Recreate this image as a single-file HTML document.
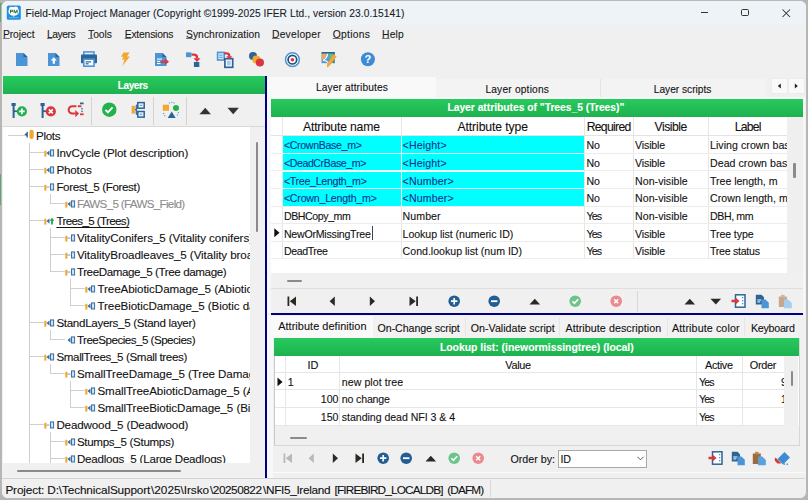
<!DOCTYPE html>
<html><head><meta charset="utf-8">
<style>
*{box-sizing:border-box}
html,body{margin:0;padding:0}
body{width:808px;height:500px;overflow:hidden;position:relative;background:#b5b5b2;font-family:"Liberation Sans",sans-serif;color:#1a1a1a}
.a{position:absolute}
.t{position:absolute;white-space:nowrap;line-height:1;-webkit-text-stroke:0.1px currentColor}
svg{position:absolute;overflow:visible}
</style></head><body>
<div class="a" style="left:0px;top:3px;width:2px;height:19px;background:#5fa874;"></div>
<div class="a" style="left:0px;top:174px;width:2px;height:31px;background:#5fa874;"></div>
<div class="a" style="left:1px;top:0px;width:805.5px;height:499px;background:#f0f0f0;border-radius:7px;border:1px solid #bab7b4"></div>
<div class="a" style="left:2px;top:1px;width:803.5px;height:24px;background:#eef3f8;border-radius:6px 6px 0 0"></div>
<svg style="left:6px;top:5px" width="16" height="16" viewBox="0 0 16 16"><rect x="0.8" y="0.6" width="14" height="14.2" rx="1.6" fill="#1e90dc"/>
<ellipse cx="7.7" cy="6.4" rx="5.3" ry="4.3" fill="#fff"/><circle cx="5.2" cy="3.8" r="2" fill="#fff"/><circle cx="9.8" cy="3.6" r="2.2" fill="#fff"/>
<path d="M4 4.8H4.9V8.2H4Z M4 4.8H6.2Q7 4.8 7 5.9Q7 7 6.2 7H4.9V6.2H6Q6.2 6.2 6.2 5.9Q6.2 5.6 6 5.6H4.9Z M7.6 4.8H8.6L9.6 7L10.6 4.8H11.6V8.2H10.8V6.2L9.9 8.2H9.3L8.4 6.2V8.2H7.6Z" fill="#2f6b2f"/>
<rect x="2.6" y="12.3" width="10.2" height="0.9" fill="#6bb6ea"/><rect x="7.2" y="11" width="0.9" height="0.9" fill="#cfe8f8"/></svg>
<div class="t" style="left:25.50px;top:8.87px;font-size:10.2px;color:#1c1c1c;letter-spacing:0.072px;">Field-Map Project Manager (Copyright ©1999-2025 IFER Ltd., version 23.0.15141)</div>
<div class="a" style="left:700.5px;top:12px;width:7.5px;height:1px;background:#333;"></div>
<div class="a" style="left:741px;top:9.3px;width:8px;height:7.2px;background:transparent;border:1px solid #333;border-radius:1.5px"></div>
<svg style="left:782px;top:8.5px" width="9" height="9" viewBox="0 0 9 9"><path d="M0.5 0.5L8 8M8 0.5L0.5 8" stroke="#333" stroke-width="1.05"/></svg>
<div class="t" style="left:2.90px;top:30.38px;font-size:10.3px;color:#1a1a1a;letter-spacing:-0.076px;"><u style="text-decoration-thickness:0.8px;text-underline-offset:0.4px;text-decoration-color:#777">P</u>roject</div>
<div class="t" style="left:47.00px;top:30.38px;font-size:10.3px;color:#1a1a1a;letter-spacing:-0.462px;"><u style="text-decoration-thickness:0.8px;text-underline-offset:0.4px;text-decoration-color:#777">L</u>ayers</div>
<div class="t" style="left:88.00px;top:30.38px;font-size:10.3px;color:#1a1a1a;letter-spacing:-0.010px;"><u style="text-decoration-thickness:0.8px;text-underline-offset:0.4px;text-decoration-color:#777">T</u>ools</div>
<div class="t" style="left:124.70px;top:30.38px;font-size:10.3px;color:#1a1a1a;letter-spacing:-0.176px;"><u style="text-decoration-thickness:0.8px;text-underline-offset:0.4px;text-decoration-color:#777">E</u>xtensions</div>
<div class="t" style="left:186.00px;top:30.38px;font-size:10.3px;color:#1a1a1a;letter-spacing:0.051px;"><u style="text-decoration-thickness:0.8px;text-underline-offset:0.4px;text-decoration-color:#777">S</u>ynchronization</div>
<div class="t" style="left:272.00px;top:30.38px;font-size:10.3px;color:#1a1a1a;letter-spacing:0.219px;"><u style="text-decoration-thickness:0.8px;text-underline-offset:0.4px;text-decoration-color:#777">D</u>eveloper</div>
<div class="t" style="left:332.80px;top:30.38px;font-size:10.3px;color:#1a1a1a;letter-spacing:0.251px;"><u style="text-decoration-thickness:0.8px;text-underline-offset:0.4px;text-decoration-color:#777">O</u>ptions</div>
<div class="t" style="left:382.00px;top:30.38px;font-size:10.3px;color:#1a1a1a;letter-spacing:0.204px;"><u style="text-decoration-thickness:0.8px;text-underline-offset:0.4px;text-decoration-color:#777">H</u>elp</div>
<svg style="left:15px;top:52px" width="14" height="15" viewBox="0 0 14 15"><path d="M1 1H8.5L12.5 5V14H1Z" fill="#4b94d6"/><path d="M8.5 1L12.5 5H8.5Z" fill="#2b6497"/></svg>
<svg style="left:47px;top:52px" width="14" height="15" viewBox="0 0 14 15"><path d="M1 1H8.5L12.5 5V14H1Z" fill="#4b94d6"/><path d="M8.5 1L12.5 5H8.5Z" fill="#2b6497"/><path d="M6.8 5.2L3.8 8.4H5.7V11.8H7.9V8.4H9.8Z" fill="#fff"/></svg>
<svg style="left:80px;top:50px" width="18" height="18" viewBox="0 0 18 18"><rect x="3.8" y="1.9" width="10.2" height="3.6" fill="#dfeaf6" stroke="#4b94d6" stroke-width="1.5"/><rect x="1" y="4.6" width="16" height="8.6" rx="0.8" fill="#2b6497"/><rect x="3.8" y="9.2" width="10.2" height="7" fill="#fff" stroke="#4b94d6" stroke-width="1.6"/><rect x="5.6" y="11.3" width="5.5" height="1.2" fill="#2b6497"/><rect x="5.6" y="13.2" width="3" height="1.2" fill="#2b6497"/></svg>
<svg style="left:119px;top:52px" width="12" height="15" viewBox="0 0 12 15"><path d="M4.5 0.5H10.5L8 4.5H10.8L3.5 14L5.5 7.5H2.8L4.5 4.8H2Z" fill="#f2a72e"/></svg>
<svg style="left:154px;top:52px" width="16" height="15" viewBox="0 0 16 15"><path d="M1 1H8.5L12.5 5V14H1Z" fill="#4b94d6"/><path d="M8.5 1L12.5 5H8.5Z" fill="#2b6497"/><rect x="3" y="6.5" width="5" height="1.1" fill="#fff"/><rect x="3" y="8.8" width="3.5" height="1.1" fill="#fff"/><rect x="3" y="11" width="3.5" height="1.1" fill="#fff"/><path d="M6.5 8.7H11V6.3L15 9.7L11 13.1V10.7H6.5Z" fill="#d9363e"/></svg>
<svg style="left:185px;top:51px" width="17" height="17" viewBox="0 0 17 17"><rect x="1" y="1.4" width="5.4" height="4.8" fill="#4b94d6"/><rect x="8.9" y="11" width="5.4" height="5" fill="#2b6497"/><path d="M6.5 3.7H8.8Q12 3.7 12 6.6V7.6" stroke="#d9363e" stroke-width="2.3" fill="none"/><path d="M8.5 7.2H15.5L12 11Z" fill="#d9363e"/></svg>
<svg style="left:216px;top:51px" width="18" height="17" viewBox="0 0 18 17"><rect x="1.6" y="1.4" width="6.6" height="7.6" fill="#dceaf8" stroke="#4b94d6" stroke-width="1.6"/><rect x="3.3" y="3.6" width="3.2" height="1" fill="#4b94d6"/><rect x="3.3" y="5.8" width="3.2" height="1" fill="#4b94d6"/><rect x="8.9" y="7.7" width="7.8" height="8.6" fill="#fff" stroke="#2b6497" stroke-width="1.7"/><rect x="10.8" y="9.6" width="4" height="4.8" fill="#a9cbee"/><path d="M8.3 2.3H10.6Q13.3 2.3 13.3 4.8V5.6" stroke="#d9363e" stroke-width="2.2" fill="none"/><path d="M10.2 5.2H16.4L13.3 8.6Z" fill="#d9363e"/></svg>
<svg style="left:247px;top:50px" width="18" height="18" viewBox="0 0 18 18"><circle cx="6" cy="6" r="4" fill="#2b6497"/><circle cx="9.4" cy="9.4" r="4" fill="#f2a72e"/><circle cx="12.9" cy="12.5" r="4.1" fill="#d9363e"/></svg>
<svg style="left:284px;top:51px" width="17" height="17" viewBox="0 0 17 17"><circle cx="8.4" cy="8.7" r="6.9" fill="#fff" stroke="#4b94d6" stroke-width="1.5"/><circle cx="8.4" cy="8.7" r="4.3" fill="#fff" stroke="#1e4f7c" stroke-width="1.7"/><circle cx="8.4" cy="8.7" r="1.8" fill="#d9363e"/></svg>
<svg style="left:320px;top:51px" width="17" height="17" viewBox="0 0 17 17"><rect x="1.5" y="2.3" width="12" height="9.9" fill="#5b9bd5"/><path d="M1.5 2.3H7Q7 7 1.5 8.8Z" fill="#e3ad5c"/><path d="M8.3 2.3H13.5V10.5L10.5 12.2Q10 7 8.3 2.3Z" fill="#58bd86"/><path d="M7.6 2.3Q7.3 7.5 3 9.3Q6.5 9.5 9 12.2" stroke="#fff" stroke-width="1.1" fill="none"/><rect x="1.5" y="1" width="13.2" height="1.6" fill="#2b6497"/><rect x="13.2" y="1" width="1.5" height="11.2" fill="#2b6497"/><path d="M13.4 3.3L16.7 5.6L9.4 15.1L7 16.5L7 13.3Z" fill="#f2a72e"/></svg>
<svg style="left:360px;top:51px" width="16" height="17" viewBox="0 0 16 17"><circle cx="7.9" cy="8.3" r="7" fill="#3d8bd3"/><text x="7.9" y="12.2" font-size="11" font-weight="bold" text-anchor="middle" fill="#fff" font-family="Liberation Sans">?</text></svg>
<div class="a" style="left:2px;top:75px;width:263px;height:1px;background:#f4eef0;"></div>
<div class="a" style="left:3px;top:76px;width:261.5px;height:18px;background:linear-gradient(#27ca5e,#1eb14f);"></div>
<div class="t" style="left:117.80px;top:80.94px;font-size:10.0px;color:#fff;letter-spacing:-0.390px;font-weight:bold;">Layers</div>
<div class="a" style="left:90.5px;top:97px;width:1px;height:28px;background:#d4d4d4;"></div>
<div class="a" style="left:152.7px;top:97px;width:1px;height:28px;background:#d4d4d4;"></div>
<div class="a" style="left:186.4px;top:97px;width:1px;height:28px;background:#d4d4d4;"></div>
<svg style="left:11px;top:102.5px" width="18" height="16" viewBox="0 0 18 16"><rect x="0.5" y="0" width="4.2" height="3" fill="#2b6497"/><rect x="1.6" y="2" width="2" height="13" fill="#2b6497"/><rect x="2.5" y="7.3" width="4" height="1.8" fill="#2b6497"/><circle cx="10.9" cy="8.4" r="5.1" fill="#22b24c"/><path d="M10.9 5.6V11.2M8.1 8.4H13.7" stroke="#fff" stroke-width="1.7"/></svg>
<svg style="left:39.5px;top:102.5px" width="18" height="16" viewBox="0 0 18 16"><rect x="0.5" y="0" width="4.2" height="3" fill="#2b6497"/><rect x="1.6" y="2" width="2" height="13" fill="#2b6497"/><rect x="2.5" y="7.3" width="4" height="1.8" fill="#2b6497"/><circle cx="10.8" cy="8.4" r="5.1" fill="#d9363e"/><path d="M8.8 6.4L12.8 10.4M12.8 6.4L8.8 10.4" stroke="#fff" stroke-width="1.6"/></svg>
<svg style="left:67px;top:101.5px" width="18" height="17" viewBox="0 0 18 17"><path d="M9.4 4.2H5.4A3.7 3.6 0 0 0 5.4 11.5H8.6" stroke="#d9363e" stroke-width="2.1" fill="none"/><path d="M8.3 8L12 11.6L8.3 15.3Z" fill="#d9363e"/><rect x="10.8" y="3.3" width="3.6" height="1.9" fill="#d9363e"/><rect x="13" y="0.5" width="3.6" height="1.8" fill="#2b6497"/><rect x="14.3" y="6.1" width="1.4" height="1.4" fill="#2b6497"/><rect x="14.3" y="8.7" width="1.4" height="1.4" fill="#2b6497"/><rect x="13" y="11.4" width="3.6" height="1.8" fill="#d9363e"/></svg>
<svg style="left:101px;top:102px" width="16" height="16" viewBox="0 0 16 16"><circle cx="8.3" cy="7.7" r="7.2" fill="#22b24c"/><path d="M4.4 7.8L6.9 10.3L11.6 5.4" stroke="#fff" stroke-width="1.9" fill="none"/></svg>
<svg style="left:129.5px;top:102px" width="16" height="16" viewBox="0 0 16 16"><rect x="1.6" y="3.8" width="3.3" height="7.8" fill="#f2a72e"/><path d="M5 7.7H6.3M6.3 3.2V12.3M6.3 3.2H8M6.3 12.3H8" stroke="#2b6497" stroke-width="1.2" fill="none"/><path d="M5.3 7.7L7 6.5V8.9Z" fill="#2b6497"/><rect x="7.8" y="0.6" width="6.4" height="5.6" fill="#eaf2fb" stroke="#2b6497" stroke-width="1.5"/><rect x="7.8" y="9.5" width="6.4" height="5.6" fill="#eaf2fb" stroke="#2b6497" stroke-width="1.5"/><rect x="9.8" y="2.8" width="2.5" height="1" fill="#4b94d6"/><rect x="9.8" y="11.7" width="2.5" height="1" fill="#4b94d6"/></svg>
<svg style="left:162px;top:102px" width="18" height="17" viewBox="0 0 18 17"><rect x="0.8" y="2.7" width="6.2" height="6.1" fill="#f2a72e"/><circle cx="14" cy="6" r="3" fill="#22b24c"/><path d="M9.7 9.4L13.7 16H5.7Z" fill="#2b6497"/><path d="M7 1.2Q10 -0.6 13 1.6M1.5 11Q2.2 13.6 4.2 15M16.5 10Q16 12.5 14.5 14" stroke="#4b94d6" stroke-width="1.1" stroke-dasharray="1.1 1.3" fill="none"/></svg>
<svg style="left:198.5px;top:106.5px" width="13" height="8" viewBox="0 0 13 8"><path d="M0.5 7.2L6.2 0.8L11.9 7.2Z" fill="#333"/></svg>
<svg style="left:227px;top:106.5px" width="13" height="8" viewBox="0 0 13 8"><path d="M0.5 0.8L6.2 7.2L11.9 0.8Z" fill="#333"/></svg>
<div class="a" style="left:2px;top:126px;width:263px;height:1px;background:#d9d9d9;"></div>
<div class="a" style="left:3px;top:127px;width:246.5px;height:336px;background:#fff;"></div>
<div class="a" style="left:249.5px;top:127px;width:15px;height:336px;background:#f0f0f0;"></div>
<div class="a" style="left:255.5px;top:142px;width:2.2px;height:89.5px;background:#8a8a8a;border-radius:1px"></div>
<div class="a" style="left:3px;top:463px;width:261.5px;height:14px;background:#f0f0f0;"></div>
<div class="a" style="left:17px;top:469.5px;width:164px;height:2px;background:#8a8a8a;border-radius:1px"></div>
<div class="a" style="left:3px;top:127px;width:246.5px;height:336px;overflow:hidden">
<div class="a" style="left:26px;top:16.4px;width:1px;height:336.6px;background:#cfcfcf;"></div>
<div class="a" style="left:47px;top:67.4px;width:1px;height:9.0px;background:#cfcfcf;"></div>
<div class="a" style="left:47px;top:101.4px;width:1px;height:43.0px;background:#cfcfcf;"></div>
<div class="a" style="left:67px;top:152.4px;width:1px;height:26.0px;background:#cfcfcf;"></div>
<div class="a" style="left:47px;top:203.4px;width:1px;height:9.0px;background:#cfcfcf;"></div>
<div class="a" style="left:47px;top:237.4px;width:1px;height:9.0px;background:#cfcfcf;"></div>
<div class="a" style="left:67px;top:254.4px;width:1px;height:26.0px;background:#cfcfcf;"></div>
<div class="a" style="left:47px;top:305.4px;width:1px;height:47.6px;background:#cfcfcf;"></div>
<div class="a" style="left:5px;top:7.9px;width:16.5px;height:1px;background:#cfcfcf;"></div>
<svg style="left:21.3px;top:2.4px" width="11" height="12" viewBox="0 -1 11 12"><path d="M0.3 4.6L3.3 2.4V6.8Z" fill="#2b6497"/><rect x="2.6" y="1.8" width="1.2" height="5.8" fill="#2b6497"/><rect x="5.3" y="-4.6" width="0" height="0"/><rect x="5.4" y="-0.3" width="4.3" height="9.4" rx="2" fill="#f2a72e"/></svg>
<div class="t" style="left:33.00px;top:3.38px;font-size:11.6px;color:#111;letter-spacing:-0.322px;">Plots</div>
<div class="a" style="left:26.0px;top:24.9px;width:15px;height:1px;background:#cfcfcf;"></div>
<svg style="left:41.0px;top:20.8px" width="11" height="10" viewBox="0 0 11 10"><rect x="0.3" y="2.8" width="2.1" height="5.8" fill="#f2a72e"/><path d="M2.5 5.1L5.5 2.5V7.7Z" fill="#2f6fa8"/><rect x="6.5" y="1.9" width="3.1" height="6.1" fill="#b9d3ee" stroke="#3a72a6" stroke-width="1"/><rect x="7.6" y="3.4" width="0.9" height="3" fill="#f4f8fc"/></svg>
<div class="t" style="left:53.40px;top:20.38px;font-size:11.6px;color:#111;letter-spacing:-0.105px;">InvCycle (Plot description)</div>
<div class="a" style="left:26.0px;top:41.9px;width:15px;height:1px;background:#cfcfcf;"></div>
<svg style="left:41.0px;top:37.8px" width="11" height="10" viewBox="0 0 11 10"><rect x="0.3" y="2.8" width="2.1" height="5.8" fill="#f2a72e"/><path d="M2.5 5.1L5.5 2.5V7.7Z" fill="#2f6fa8"/><rect x="6.5" y="1.9" width="3.1" height="6.1" fill="#b9d3ee" stroke="#3a72a6" stroke-width="1"/><rect x="7.6" y="3.4" width="0.9" height="3" fill="#f4f8fc"/></svg>
<div class="t" style="left:53.40px;top:37.38px;font-size:11.6px;color:#111;letter-spacing:-0.142px;">Photos</div>
<div class="a" style="left:26.0px;top:58.9px;width:15px;height:1px;background:#cfcfcf;"></div>
<svg style="left:41.0px;top:54.8px" width="11" height="10" viewBox="0 0 11 10"><rect x="0.3" y="2.8" width="2.1" height="5.8" fill="#f2a72e"/><rect x="2.3" y="4.5" width="3.2" height="1.1" fill="#8aa6c4"/><rect x="6.5" y="1.9" width="3.1" height="6.1" fill="#b9d3ee" stroke="#3a72a6" stroke-width="1"/><rect x="7.6" y="3.4" width="0.9" height="3" fill="#f4f8fc"/></svg>
<div class="t" style="left:53.40px;top:54.38px;font-size:11.6px;color:#111;letter-spacing:-0.356px;">Forest_5 (Forest)</div>
<div class="a" style="left:46.5px;top:75.9px;width:15px;height:1px;background:#cfcfcf;"></div>
<svg style="left:61.5px;top:71.8px" width="11" height="10" viewBox="0 0 11 10"><rect x="0.3" y="2.8" width="2.1" height="5.8" fill="#f2a72e"/><path d="M2.5 5.1L5.5 2.5V7.7Z" fill="#2f6fa8"/><rect x="6.5" y="1.9" width="3.1" height="6.1" fill="#b9d3ee" stroke="#3a72a6" stroke-width="1"/><rect x="7.6" y="3.4" width="0.9" height="3" fill="#f4f8fc"/></svg>
<div class="t" style="left:73.90px;top:71.38px;font-size:11.6px;color:#8c8c8c;letter-spacing:-0.663px;">FAWS_5 (FAWS_Field)</div>
<div class="a" style="left:26.0px;top:92.9px;width:15px;height:1px;background:#cfcfcf;"></div>
<svg style="left:41.0px;top:88.8px" width="11" height="10" viewBox="0 0 11 10"><rect x="0.3" y="2.8" width="2.1" height="5.8" fill="#f2a72e"/><path d="M2.5 5.1L5.5 2.5V7.7Z" fill="#2f6fa8"/><path d="M8 1.8L10.4 4.8H8.9V8.6H7.1V4.8H5.6Z" fill="#23a84a"/></svg>
<div class="t" style="left:53.40px;top:88.38px;font-size:11.6px;color:#111;letter-spacing:-0.628px;text-decoration:underline;text-decoration-thickness:1px;text-underline-offset:1.6px;">Trees_5 (Trees)</div>
<div class="a" style="left:46.5px;top:109.9px;width:15px;height:1px;background:#cfcfcf;"></div>
<svg style="left:61.5px;top:105.8px" width="11" height="10" viewBox="0 0 11 10"><rect x="0.3" y="2.8" width="2.1" height="5.8" fill="#f2a72e"/><rect x="2.3" y="4.5" width="3.2" height="1.1" fill="#8aa6c4"/><rect x="6.5" y="1.9" width="3.1" height="6.1" fill="#b9d3ee" stroke="#3a72a6" stroke-width="1"/><rect x="7.6" y="3.4" width="0.9" height="3" fill="#f4f8fc"/></svg>
<div class="t" style="left:73.90px;top:105.38px;font-size:11.6px;color:#111;letter-spacing:-0.07px;">VitalityConifers_5 (Vitality conifers)</div>
<div class="a" style="left:46.5px;top:126.9px;width:15px;height:1px;background:#cfcfcf;"></div>
<svg style="left:61.5px;top:122.8px" width="11" height="10" viewBox="0 0 11 10"><rect x="0.3" y="2.8" width="2.1" height="5.8" fill="#f2a72e"/><rect x="2.3" y="4.5" width="3.2" height="1.1" fill="#8aa6c4"/><rect x="6.5" y="1.9" width="3.1" height="6.1" fill="#b9d3ee" stroke="#3a72a6" stroke-width="1"/><rect x="7.6" y="3.4" width="0.9" height="3" fill="#f4f8fc"/></svg>
<div class="t" style="left:73.90px;top:122.38px;font-size:11.6px;color:#111;letter-spacing:-0.07px;">VitalityBroadleaves_5 (Vitality broadleaves)</div>
<div class="a" style="left:46.5px;top:143.9px;width:15px;height:1px;background:#cfcfcf;"></div>
<svg style="left:61.5px;top:139.8px" width="11" height="10" viewBox="0 0 11 10"><rect x="0.3" y="2.8" width="2.1" height="5.8" fill="#f2a72e"/><rect x="2.3" y="4.5" width="3.2" height="1.1" fill="#8aa6c4"/><rect x="6.5" y="1.9" width="3.1" height="6.1" fill="#b9d3ee" stroke="#3a72a6" stroke-width="1"/><rect x="7.6" y="3.4" width="0.9" height="3" fill="#f4f8fc"/></svg>
<div class="t" style="left:73.90px;top:139.38px;font-size:11.6px;color:#111;letter-spacing:-0.395px;">TreeDamage_5 (Tree damage)</div>
<div class="a" style="left:67.0px;top:160.9px;width:15px;height:1px;background:#cfcfcf;"></div>
<svg style="left:82.0px;top:156.8px" width="11" height="10" viewBox="0 0 11 10"><rect x="0.3" y="2.8" width="2.1" height="5.8" fill="#f2a72e"/><path d="M2.5 5.1L5.5 2.5V7.7Z" fill="#2f6fa8"/><rect x="6.5" y="1.9" width="3.1" height="6.1" fill="#b9d3ee" stroke="#3a72a6" stroke-width="1"/><rect x="7.6" y="3.4" width="0.9" height="3" fill="#f4f8fc"/></svg>
<div class="t" style="left:94.40px;top:156.38px;font-size:11.6px;color:#111;letter-spacing:-0.07px;">TreeAbioticDamage_5 (Abiotic damage)</div>
<div class="a" style="left:67.0px;top:177.9px;width:15px;height:1px;background:#cfcfcf;"></div>
<svg style="left:82.0px;top:173.8px" width="11" height="10" viewBox="0 0 11 10"><rect x="0.3" y="2.8" width="2.1" height="5.8" fill="#f2a72e"/><path d="M2.5 5.1L5.5 2.5V7.7Z" fill="#2f6fa8"/><rect x="6.5" y="1.9" width="3.1" height="6.1" fill="#b9d3ee" stroke="#3a72a6" stroke-width="1"/><rect x="7.6" y="3.4" width="0.9" height="3" fill="#f4f8fc"/></svg>
<div class="t" style="left:94.40px;top:173.38px;font-size:11.6px;color:#111;letter-spacing:-0.07px;">TreeBioticDamage_5 (Biotic damage)</div>
<div class="a" style="left:26.0px;top:194.9px;width:15px;height:1px;background:#cfcfcf;"></div>
<svg style="left:41.0px;top:190.8px" width="11" height="10" viewBox="0 0 11 10"><rect x="0.3" y="2.8" width="2.1" height="5.8" fill="#f2a72e"/><path d="M2.5 5.1L5.5 2.5V7.7Z" fill="#2f6fa8"/><rect x="6.5" y="1.9" width="3.1" height="6.1" fill="#b9d3ee" stroke="#3a72a6" stroke-width="1"/><rect x="7.6" y="3.4" width="0.9" height="3" fill="#f4f8fc"/></svg>
<div class="t" style="left:53.40px;top:190.38px;font-size:11.6px;color:#111;letter-spacing:-0.310px;">StandLayers_5 (Stand layer)</div>
<div class="a" style="left:46.5px;top:211.9px;width:15px;height:1px;background:#cfcfcf;"></div>
<svg style="left:61.5px;top:207.8px" width="11" height="10" viewBox="0 0 11 10"><path d="M2.5 5.1L5.5 2.5V7.7Z" fill="#2f6fa8"/><rect x="6.5" y="1.9" width="3.1" height="6.1" fill="#b9d3ee" stroke="#3a72a6" stroke-width="1"/><rect x="7.6" y="3.4" width="0.9" height="3" fill="#f4f8fc"/></svg>
<div class="t" style="left:73.90px;top:207.38px;font-size:11.6px;color:#111;letter-spacing:-0.505px;">TreeSpecies_5 (Species)</div>
<div class="a" style="left:26.0px;top:228.9px;width:15px;height:1px;background:#cfcfcf;"></div>
<svg style="left:41.0px;top:224.8px" width="11" height="10" viewBox="0 0 11 10"><rect x="0.3" y="2.8" width="2.1" height="5.8" fill="#f2a72e"/><path d="M2.5 5.1L5.5 2.5V7.7Z" fill="#2f6fa8"/><rect x="6.5" y="1.9" width="3.1" height="6.1" fill="#b9d3ee" stroke="#3a72a6" stroke-width="1"/><rect x="7.6" y="3.4" width="0.9" height="3" fill="#f4f8fc"/></svg>
<div class="t" style="left:53.40px;top:224.38px;font-size:11.6px;color:#111;letter-spacing:-0.364px;">SmallTrees_5 (Small trees)</div>
<div class="a" style="left:46.5px;top:245.9px;width:15px;height:1px;background:#cfcfcf;"></div>
<svg style="left:61.5px;top:241.8px" width="11" height="10" viewBox="0 0 11 10"><rect x="0.3" y="2.8" width="2.1" height="5.8" fill="#f2a72e"/><rect x="2.3" y="4.5" width="3.2" height="1.1" fill="#8aa6c4"/><rect x="6.5" y="1.9" width="3.1" height="6.1" fill="#b9d3ee" stroke="#3a72a6" stroke-width="1"/><rect x="7.6" y="3.4" width="0.9" height="3" fill="#f4f8fc"/></svg>
<div class="t" style="left:73.90px;top:241.38px;font-size:11.6px;color:#111;letter-spacing:-0.07px;">SmallTreeDamage_5 (Tree Damage)</div>
<div class="a" style="left:67.0px;top:262.9px;width:15px;height:1px;background:#cfcfcf;"></div>
<svg style="left:82.0px;top:258.8px" width="11" height="10" viewBox="0 0 11 10"><rect x="0.3" y="2.8" width="2.1" height="5.8" fill="#f2a72e"/><path d="M2.5 5.1L5.5 2.5V7.7Z" fill="#2f6fa8"/><rect x="6.5" y="1.9" width="3.1" height="6.1" fill="#b9d3ee" stroke="#3a72a6" stroke-width="1"/><rect x="7.6" y="3.4" width="0.9" height="3" fill="#f4f8fc"/></svg>
<div class="t" style="left:94.40px;top:258.38px;font-size:11.6px;color:#111;letter-spacing:-0.07px;">SmallTreeAbioticDamage_5 (Abiotic damage)</div>
<div class="a" style="left:67.0px;top:279.9px;width:15px;height:1px;background:#cfcfcf;"></div>
<svg style="left:82.0px;top:275.8px" width="11" height="10" viewBox="0 0 11 10"><rect x="0.3" y="2.8" width="2.1" height="5.8" fill="#f2a72e"/><path d="M2.5 5.1L5.5 2.5V7.7Z" fill="#2f6fa8"/><rect x="6.5" y="1.9" width="3.1" height="6.1" fill="#b9d3ee" stroke="#3a72a6" stroke-width="1"/><rect x="7.6" y="3.4" width="0.9" height="3" fill="#f4f8fc"/></svg>
<div class="t" style="left:94.40px;top:275.38px;font-size:11.6px;color:#111;letter-spacing:-0.07px;">SmallTreeBioticDamage_5 (Biotic damage)</div>
<div class="a" style="left:26.0px;top:296.9px;width:15px;height:1px;background:#cfcfcf;"></div>
<svg style="left:41.0px;top:292.8px" width="11" height="10" viewBox="0 0 11 10"><rect x="0.3" y="2.8" width="2.1" height="5.8" fill="#f2a72e"/><rect x="2.3" y="4.5" width="3.2" height="1.1" fill="#8aa6c4"/><rect x="6.5" y="1.9" width="3.1" height="6.1" fill="#b9d3ee" stroke="#3a72a6" stroke-width="1"/><rect x="7.6" y="3.4" width="0.9" height="3" fill="#f4f8fc"/></svg>
<div class="t" style="left:53.40px;top:292.38px;font-size:11.6px;color:#111;letter-spacing:-0.139px;">Deadwood_5 (Deadwood)</div>
<div class="a" style="left:46.5px;top:313.9px;width:15px;height:1px;background:#cfcfcf;"></div>
<svg style="left:61.5px;top:309.8px" width="11" height="10" viewBox="0 0 11 10"><rect x="0.3" y="2.8" width="2.1" height="5.8" fill="#f2a72e"/><path d="M2.5 5.1L5.5 2.5V7.7Z" fill="#2f6fa8"/><rect x="6.5" y="1.9" width="3.1" height="6.1" fill="#b9d3ee" stroke="#3a72a6" stroke-width="1"/><rect x="7.6" y="3.4" width="0.9" height="3" fill="#f4f8fc"/></svg>
<div class="t" style="left:73.90px;top:309.38px;font-size:11.6px;color:#111;letter-spacing:-0.312px;">Stumps_5 (Stumps)</div>
<div class="a" style="left:46.5px;top:330.9px;width:15px;height:1px;background:#cfcfcf;"></div>
<svg style="left:61.5px;top:326.8px" width="11" height="10" viewBox="0 0 11 10"><rect x="0.3" y="2.8" width="2.1" height="5.8" fill="#f2a72e"/><path d="M2.5 5.1L5.5 2.5V7.7Z" fill="#2f6fa8"/><rect x="6.5" y="1.9" width="3.1" height="6.1" fill="#b9d3ee" stroke="#3a72a6" stroke-width="1"/><rect x="7.6" y="3.4" width="0.9" height="3" fill="#f4f8fc"/></svg>
<div class="t" style="left:73.90px;top:326.38px;font-size:11.6px;color:#111;letter-spacing:-0.222px;">Deadlogs_5 (Large Deadlogs)</div>
</div>
<div class="a" style="left:264.6px;top:76px;width:2.7px;height:402px;background:#000080;"></div>
<div class="a" style="left:267.3px;top:76px;width:538px;height:23px;background:#f0f0f0;"></div>
<div class="a" style="left:267.3px;top:77px;width:168.3px;height:22px;background:#f9f9f9;"></div>
<div class="a" style="left:435.6px;top:79px;width:164px;height:20px;background:#f3f3f3;"></div>
<div class="a" style="left:599.7px;top:79px;width:0.8px;height:20px;background:#e4e4e4;"></div>
<div class="a" style="left:600.5px;top:79px;width:165.5px;height:20px;background:#f3f3f3;"></div>
<div class="t" style="left:316.00px;top:83.37px;font-size:10.2px;color:#111;letter-spacing:0.106px;">Layer attributes</div>
<div class="t" style="left:485.40px;top:84.77px;font-size:10.2px;color:#111;letter-spacing:0.197px;">Layer options</div>
<div class="t" style="left:653.80px;top:84.77px;font-size:10.2px;color:#111;letter-spacing:-0.018px;">Layer scripts</div>
<div class="a" style="left:770.6px;top:77.8px;width:17.4px;height:16.2px;background:#f9f9f9;border:1px solid #ececec"></div>
<div class="a" style="left:788.3px;top:77.8px;width:17px;height:16.2px;background:#f9f9f9;border:1px solid #ececec"></div>
<svg style="left:776.5px;top:83px" width="5" height="6" viewBox="0 0 5 6"><path d="M3.8 0.5V5.5L0.8 3Z" fill="#222"/></svg>
<svg style="left:794px;top:83px" width="5" height="6" viewBox="0 0 5 6"><path d="M0.8 0.5V5.5L3.8 3Z" fill="#222"/></svg>
<div class="a" style="left:267.3px;top:97px;width:538px;height:216px;background:#f7f7f7;"></div>
<div class="a" style="left:271px;top:99px;width:531.6px;height:17.5px;background:linear-gradient(#27ca5e,#1eb14f);"></div>
<div class="t" style="left:447.40px;top:103.28px;font-size:10.3px;color:#fff;letter-spacing:-0.014px;font-weight:bold;">Layer attributes of "Trees_5 (Trees)"</div>
<div class="a" style="left:271px;top:116.5px;width:531.6px;height:156.5px;background:#fff;"></div>
<div class="a" style="left:271px;top:135px;width:516px;height:1px;background:#e3e3e3;"></div>
<div class="a" style="left:282px;top:116.5px;width:1px;height:142.5px;background:#e6e6e6;"></div>
<div class="a" style="left:401px;top:116.5px;width:1px;height:142.5px;background:#e6e6e6;"></div>
<div class="a" style="left:584px;top:116.5px;width:1px;height:142.5px;background:#e6e6e6;"></div>
<div class="a" style="left:633px;top:116.5px;width:1px;height:142.5px;background:#e6e6e6;"></div>
<div class="a" style="left:708px;top:116.5px;width:1px;height:142.5px;background:#e6e6e6;"></div>
<div class="t" style="left:303.00px;top:120.87px;font-size:12.2px;color:#111;letter-spacing:-0.180px;">Attribute name</div>
<div class="t" style="left:457.50px;top:120.87px;font-size:12.2px;color:#111;letter-spacing:-0.106px;">Attribute type</div>
<div class="t" style="left:586.70px;top:120.87px;font-size:12.2px;color:#111;letter-spacing:-0.701px;">Required</div>
<div class="t" style="left:654.50px;top:120.87px;font-size:12.2px;color:#111;letter-spacing:-0.487px;">Visible</div>
<div class="t" style="left:734.70px;top:120.87px;font-size:12.2px;color:#111;letter-spacing:-0.738px;">Label</div>
<div class="a" style="left:271px;top:116.5px;width:515.8px;height:156px;overflow:hidden">
<div class="a" style="left:12px;top:19.9px;width:301px;height:16.65px;background:#00ffff;"></div>
<div class="a" style="left:130px;top:19.9px;width:1px;height:16.65px;background:#e8ffff;"></div>
<div class="a" style="left:0px;top:36.05px;width:516px;height:1px;background:#ececec;"></div>
<div class="a" style="left:12px;top:36.05px;width:301px;height:1px;background:#e6fdfd;"></div>
<div class="t" style="left:12.90px;top:23.93px;font-size:10.6px;color:#14308c;letter-spacing:-0.325px;">&lt;CrownBase_m&gt;</div>
<div class="t" style="left:131.60px;top:23.93px;font-size:10.6px;color:#14308c;letter-spacing:0.139px;">&lt;Height&gt;</div>
<div class="t" style="left:315.50px;top:23.93px;font-size:10.6px;color:#111;letter-spacing:-0.047px;">No</div>
<div class="t" style="left:364.10px;top:23.93px;font-size:10.6px;color:#111;letter-spacing:-0.156px;">Visible</div>
<div class="t" style="left:439.00px;top:23.93px;font-size:10.6px;color:#111;letter-spacing:0.05px;">Living crown base, m</div>
<div class="a" style="left:12px;top:37.55px;width:301px;height:16.65px;background:#00ffff;"></div>
<div class="a" style="left:130px;top:37.55px;width:1px;height:16.65px;background:#e8ffff;"></div>
<div class="a" style="left:0px;top:53.7px;width:516px;height:1px;background:#ececec;"></div>
<div class="a" style="left:12px;top:53.7px;width:301px;height:1px;background:#e6fdfd;"></div>
<div class="t" style="left:12.90px;top:41.58px;font-size:10.6px;color:#14308c;letter-spacing:-0.407px;">&lt;DeadCrBase_m&gt;</div>
<div class="t" style="left:131.60px;top:41.58px;font-size:10.6px;color:#14308c;letter-spacing:0.139px;">&lt;Height&gt;</div>
<div class="t" style="left:315.50px;top:41.58px;font-size:10.6px;color:#111;letter-spacing:-0.047px;">No</div>
<div class="t" style="left:364.10px;top:41.58px;font-size:10.6px;color:#111;letter-spacing:-0.156px;">Visible</div>
<div class="t" style="left:439.00px;top:41.58px;font-size:10.6px;color:#111;letter-spacing:0.05px;">Dead crown base, m</div>
<div class="a" style="left:12px;top:55.2px;width:301px;height:16.65px;background:#00ffff;"></div>
<div class="a" style="left:130px;top:55.2px;width:1px;height:16.65px;background:#e8ffff;"></div>
<div class="a" style="left:0px;top:71.35px;width:516px;height:1px;background:#ececec;"></div>
<div class="a" style="left:12px;top:71.35px;width:301px;height:1px;background:#e6fdfd;"></div>
<div class="t" style="left:12.90px;top:59.23px;font-size:10.6px;color:#14308c;letter-spacing:-0.273px;">&lt;Tree_Length_m&gt;</div>
<div class="t" style="left:131.60px;top:59.23px;font-size:10.6px;color:#14308c;letter-spacing:0.131px;">&lt;Number&gt;</div>
<div class="t" style="left:315.50px;top:59.23px;font-size:10.6px;color:#111;letter-spacing:-0.047px;">No</div>
<div class="t" style="left:364.10px;top:59.23px;font-size:10.6px;color:#111;letter-spacing:0.027px;">Non-visible</div>
<div class="t" style="left:439.00px;top:59.23px;font-size:10.6px;color:#111;letter-spacing:-0.034px;">Tree length, m</div>
<div class="a" style="left:12px;top:72.85px;width:301px;height:16.65px;background:#00ffff;"></div>
<div class="a" style="left:130px;top:72.85px;width:1px;height:16.65px;background:#e8ffff;"></div>
<div class="a" style="left:0px;top:89.0px;width:516px;height:1px;background:#ececec;"></div>
<div class="t" style="left:12.90px;top:76.88px;font-size:10.6px;color:#14308c;letter-spacing:-0.204px;">&lt;Crown_Length_m&gt;</div>
<div class="t" style="left:131.60px;top:76.88px;font-size:10.6px;color:#14308c;letter-spacing:0.131px;">&lt;Number&gt;</div>
<div class="t" style="left:315.50px;top:76.88px;font-size:10.6px;color:#111;letter-spacing:-0.047px;">No</div>
<div class="t" style="left:364.10px;top:76.88px;font-size:10.6px;color:#111;letter-spacing:0.027px;">Non-visible</div>
<div class="t" style="left:439.00px;top:76.88px;font-size:10.6px;color:#111;letter-spacing:0.05px;">Crown length, m</div>
<div class="a" style="left:0px;top:106.65px;width:516px;height:1px;background:#ececec;"></div>
<div class="t" style="left:12.90px;top:94.53px;font-size:10.6px;color:#111;letter-spacing:-0.409px;">DBHCopy_mm</div>
<div class="t" style="left:131.60px;top:94.53px;font-size:10.6px;color:#111;letter-spacing:0.059px;">Number</div>
<div class="t" style="left:315.50px;top:94.53px;font-size:10.6px;color:#111;letter-spacing:-0.844px;">Yes</div>
<div class="t" style="left:364.10px;top:94.53px;font-size:10.6px;color:#111;letter-spacing:0.027px;">Non-visible</div>
<div class="t" style="left:439.00px;top:94.53px;font-size:10.6px;color:#111;letter-spacing:-0.388px;">DBH, mm</div>
<div class="a" style="left:0px;top:124.3px;width:516px;height:1px;background:#ececec;"></div>
<div class="t" style="left:12.90px;top:112.18px;font-size:10.6px;color:#111;letter-spacing:-0.221px;">NewOrMissingTree</div>
<div class="t" style="left:131.60px;top:112.18px;font-size:10.6px;color:#111;letter-spacing:-0.049px;">Lookup list (numeric ID)</div>
<div class="t" style="left:315.50px;top:112.18px;font-size:10.6px;color:#111;letter-spacing:-0.844px;">Yes</div>
<div class="t" style="left:364.10px;top:112.18px;font-size:10.6px;color:#111;letter-spacing:-0.156px;">Visible</div>
<div class="t" style="left:439.00px;top:112.18px;font-size:10.6px;color:#111;letter-spacing:-0.098px;">Tree type</div>
<div class="a" style="left:0px;top:141.95px;width:516px;height:1px;background:#ececec;"></div>
<div class="t" style="left:12.90px;top:129.83px;font-size:10.6px;color:#111;letter-spacing:-0.392px;">DeadTree</div>
<div class="t" style="left:131.60px;top:129.83px;font-size:10.6px;color:#111;letter-spacing:-0.004px;">Cond.lookup list (num ID)</div>
<div class="t" style="left:315.50px;top:129.83px;font-size:10.6px;color:#111;letter-spacing:-0.844px;">Yes</div>
<div class="t" style="left:364.10px;top:129.83px;font-size:10.6px;color:#111;letter-spacing:-0.156px;">Visible</div>
<div class="t" style="left:439.00px;top:129.83px;font-size:10.6px;color:#111;letter-spacing:-0.263px;">Tree status</div>
</div>
<svg style="left:274.3px;top:227.6px" width="6" height="10" viewBox="0 0 6 10"><path d="M0.3 0.3L5.5 4.8L0.3 9.3Z" fill="#111"/></svg>
<div class="a" style="left:372px;top:226px;width:1px;height:14px;background:#444;"></div>
<div class="a" style="left:786.8px;top:116.5px;width:15.8px;height:156.5px;background:#efefef;"></div>
<div class="a" style="left:793.4px;top:163.4px;width:2.4px;height:15px;background:#8a8a8a;border-radius:1px"></div>
<div class="a" style="left:271px;top:273px;width:531.6px;height:15.5px;background:#f0f0f0;"></div>
<div class="a" style="left:287px;top:279.8px;width:15px;height:2px;background:#8a8a8a;border-radius:1px"></div>
<div class="a" style="left:271px;top:288.3px;width:531.6px;height:1px;background:#dedede;"></div>
<div class="a" style="left:271px;top:289.3px;width:531.6px;height:23.7px;background:#f0f0f0;"></div>
<div class="a" style="left:636.5px;top:291px;width:1px;height:21px;background:#d8d8d8;"></div>
<svg style="left:287px;top:296px" width="10" height="11" viewBox="0 0 10 11"><rect x="0.5" y="0.5" width="1.8" height="9.5" fill="#2a2a22"/><path d="M9 0.5V10L2.8 5.25Z" fill="#2a2a22"/></svg>
<svg style="left:329px;top:296px" width="7" height="11" viewBox="0 0 7 11"><path d="M5.8 0.5V10L0.6 5.25Z" fill="#2a2a22"/></svg>
<svg style="left:369px;top:296px" width="7" height="11" viewBox="0 0 7 11"><path d="M0.8 0.5V10L6 5.25Z" fill="#2a2a22"/></svg>
<svg style="left:408.5px;top:296px" width="10" height="11" viewBox="0 0 10 11"><path d="M0.5 0.5V10L6.7 5.25Z" fill="#2a2a22"/><rect x="7.2" y="0.5" width="1.8" height="9.5" fill="#2a2a22"/></svg>
<svg style="left:447.5px;top:295px" width="13" height="13" viewBox="0 0 13 13"><circle cx="6.2" cy="6.2" r="5.8" fill="#215e93"/><path d="M6.2 3V9.4M3 6.2H9.4" stroke="#fff" stroke-width="1.7"/></svg>
<svg style="left:488px;top:295px" width="13" height="13" viewBox="0 0 13 13"><circle cx="6.2" cy="6.2" r="5.8" fill="#215e93"/><path d="M3 6.2H9.4" stroke="#fff" stroke-width="1.8"/></svg>
<svg style="left:529px;top:297.5px" width="12" height="7" viewBox="0 0 12 7"><path d="M0.5 6.5L5.8 0.8L11.1 6.5Z" fill="#2a2a22"/></svg>
<svg style="left:569px;top:295px" width="13" height="13" viewBox="0 0 13 13"><circle cx="6.2" cy="6.2" r="5.8" fill="#6cc48a"/><path d="M3.4 6.3L5.4 8.3L9.2 4.3" stroke="#fff" stroke-width="1.6" fill="none"/></svg>
<svg style="left:609.5px;top:295px" width="13" height="13" viewBox="0 0 13 13"><circle cx="6.2" cy="6.2" r="5.8" fill="#ea8a8e"/><path d="M4.2 4.2L8.2 8.2M8.2 4.2L4.2 8.2" stroke="#fff" stroke-width="1.5"/></svg>
<svg style="left:684px;top:297.5px" width="12" height="7" viewBox="0 0 12 7"><path d="M0.5 6.5L5.8 0.8L11.1 6.5Z" fill="#2a2a22"/></svg>
<svg style="left:710px;top:297.5px" width="12" height="7" viewBox="0 0 12 7"><path d="M0.5 0.8L5.8 6.5L11.1 0.8Z" fill="#2a2a22"/></svg>
<svg style="left:731px;top:294px" width="15" height="14" viewBox="0 0 15 14"><rect x="4.5" y="0.8" width="9.5" height="12.4" fill="#fff" stroke="#2b6497" stroke-width="1.5"/><rect x="11" y="3" width="1.3" height="1.3" fill="#4b94d6"/><rect x="11" y="6" width="1.3" height="1.3" fill="#4b94d6"/><rect x="11" y="9" width="1.3" height="1.3" fill="#4b94d6"/><path d="M0.5 5.8H4.5V3.5L8.5 7L4.5 10.5V8.2H0.5Z" fill="#d9363e"/></svg>
<svg style="left:755px;top:293.5px" width="15" height="15" viewBox="0 0 15 15"><path d="M0.8 0.8H6.5L9 3.3V10.5H0.8Z" fill="#2b6497"/><rect x="2.3" y="5.5" width="4" height="1" fill="#fff"/><rect x="2.3" y="7.4" width="3" height="1" fill="#fff"/><path d="M6.5 5.5H10.5L13.8 8.8V14.2H6.5Z" fill="#4b94d6"/></svg>
<svg style="left:777.5px;top:293.5px" width="15" height="15" viewBox="0 0 15 15"><rect x="0.8" y="2.5" width="8" height="10.5" fill="#c7a88e"/><rect x="3" y="0.8" width="3.6" height="2.5" fill="#d6b999"/><path d="M6 5.5H10.2L13.8 9V14.2H6Z" fill="#a9cdee"/></svg>
<div class="a" style="left:271px;top:313.4px;width:531.6px;height:1.8px;background:#000080;"></div>
<div class="a" style="left:267.3px;top:315.3px;width:538px;height:163px;background:#f0f0f0;"></div>
<div class="a" style="left:267.3px;top:315.3px;width:6px;height:163px;background:#f7f7f7;"></div>
<div class="a" style="left:271px;top:316px;width:102.3px;height:22px;background:#f9f9f9;"></div>
<div class="a" style="left:373.3px;top:317.2px;width:425px;height:21px;background:#f2f2f2;"></div>
<div class="a" style="left:465.4px;top:318px;width:0.8px;height:19px;background:#e6e6e6;"></div>
<div class="a" style="left:559.4px;top:318px;width:0.8px;height:19px;background:#e6e6e6;"></div>
<div class="a" style="left:666.8px;top:318px;width:0.8px;height:19px;background:#e6e6e6;"></div>
<div class="a" style="left:744.2px;top:318px;width:0.8px;height:19px;background:#e6e6e6;"></div>
<div class="t" style="left:278.20px;top:320.97px;font-size:10.9px;color:#111;letter-spacing:0.060px;">Attribute definition</div>
<div class="t" style="left:377.60px;top:322.94px;font-size:10.7px;color:#111;letter-spacing:-0.104px;">On-Change script</div>
<div class="t" style="left:470.80px;top:322.94px;font-size:10.7px;color:#111;letter-spacing:-0.015px;">On-Validate script</div>
<div class="t" style="left:565.50px;top:322.94px;font-size:10.7px;color:#111;letter-spacing:0.062px;">Attribute description</div>
<div class="t" style="left:672.00px;top:322.94px;font-size:10.7px;color:#111;letter-spacing:0.114px;">Attribute color</div>
<div class="t" style="left:750.90px;top:322.94px;font-size:10.7px;color:#111;letter-spacing:-0.258px;">Keyboard</div>
<div class="a" style="left:274.4px;top:337.8px;width:524.5px;height:107.5px;background:#fff;border-left:1px solid #c8c8c8"></div>
<div class="a" style="left:274.4px;top:338px;width:524.5px;height:17.8px;background:linear-gradient(#27ca5e,#1eb14f);"></div>
<div class="t" style="left:439.90px;top:342.70px;font-size:10.4px;color:#fff;letter-spacing:-0.004px;font-weight:bold;">Lookup list: (inewormissingtree) (local)</div>
<div class="a" style="left:285.2px;top:355.8px;width:1px;height:69px;background:#e6e6e6;"></div>
<div class="a" style="left:339.3px;top:355.8px;width:1px;height:69px;background:#e6e6e6;"></div>
<div class="a" style="left:696px;top:355.8px;width:1px;height:70px;background:#e6e6e6;"></div>
<div class="a" style="left:742px;top:355.8px;width:1px;height:70px;background:#e6e6e6;"></div>
<div class="a" style="left:275.4px;top:371.7px;width:509px;height:1px;background:#e6e6e6;"></div>
<div class="a" style="left:275.4px;top:389.4px;width:509px;height:1px;background:#e6e6e6;"></div>
<div class="a" style="left:275.4px;top:407.1px;width:509px;height:1px;background:#e6e6e6;"></div>
<div class="a" style="left:275.4px;top:424.8px;width:509px;height:1px;background:#e6e6e6;"></div>
<div class="t" style="left:307.60px;top:359.77px;font-size:10.9px;color:#111;">ID</div>
<div class="t" style="left:505.30px;top:359.77px;font-size:10.9px;color:#111;letter-spacing:-0.341px;">Value</div>
<div class="t" style="left:705.00px;top:359.77px;font-size:10.9px;color:#111;letter-spacing:-0.336px;">Active</div>
<div class="t" style="left:749.70px;top:359.77px;font-size:10.9px;color:#111;letter-spacing:-0.265px;">Order</div>
<div class="t" style="left:287.80px;top:376.53px;font-size:10.6px;color:#111;">1</div>
<div class="t" style="left:341.80px;top:376.53px;font-size:10.6px;color:#111;letter-spacing:0.059px;">new plot tree</div>
<div class="t" style="left:698.90px;top:376.53px;font-size:10.6px;color:#111;letter-spacing:-0.844px;">Yes</div>
<div class="a" style="left:742px;top:372.2px;width:42.2px;height:17px;overflow:hidden">
<div class="t" style="left:0.00px;top:4.33px;font-size:10.6px;color:#111;width:45px;text-align:right;">9</div>
</div>
<div class="t" style="left:280.00px;top:394.23px;font-size:10.6px;color:#111;width:58.5px;text-align:right;">100</div>
<div class="t" style="left:341.80px;top:394.23px;font-size:10.6px;color:#111;letter-spacing:-0.164px;">no change</div>
<div class="t" style="left:698.90px;top:394.23px;font-size:10.6px;color:#111;letter-spacing:-0.844px;">Yes</div>
<div class="a" style="left:742px;top:389.9px;width:42.2px;height:17px;overflow:hidden">
<div class="t" style="left:0.00px;top:4.33px;font-size:10.6px;color:#111;width:45px;text-align:right;">1</div>
</div>
<div class="t" style="left:280.00px;top:411.93px;font-size:10.6px;color:#111;width:58.5px;text-align:right;">150</div>
<div class="t" style="left:341.80px;top:411.93px;font-size:10.6px;color:#111;letter-spacing:-0.046px;">standing dead NFI 3 &amp; 4</div>
<div class="t" style="left:698.90px;top:411.93px;font-size:10.6px;color:#111;letter-spacing:-0.844px;">Yes</div>
<div class="a" style="left:742px;top:407.59999999999997px;width:42.2px;height:17px;overflow:hidden">
<div class="t" style="left:0.00px;top:4.33px;font-size:10.6px;color:#111;width:45px;text-align:right;"></div>
</div>
<svg style="left:276.5px;top:376.5px" width="7" height="10" viewBox="0 0 7 10"><path d="M0.5 0.5L5.6 4.9L0.5 9.3Z" fill="#111"/></svg>
<div class="a" style="left:784.2px;top:355.8px;width:14px;height:70px;background:#efefef;"></div>
<div class="a" style="left:790.5px;top:371px;width:2.2px;height:14.5px;background:#8a8a8a;border-radius:1px"></div>
<div class="a" style="left:275.4px;top:425.8px;width:523.5px;height:19.5px;background:#f0f0f0;"></div>
<div class="a" style="left:290px;top:436.5px;width:17px;height:2px;background:#8a8a8a;border-radius:1px"></div>
<div class="a" style="left:274.4px;top:445.2px;width:524.5px;height:1px;background:#d6d6d6;"></div>
<div class="a" style="left:798.5px;top:337.8px;width:1px;height:108px;background:#d6d6d6;"></div>
<svg style="left:283px;top:452.5px" width="10" height="11" viewBox="0 0 10 11"><rect x="0.5" y="0.5" width="1.8" height="9.5" fill="#b8b8b8"/><path d="M9 0.5V10L2.8 5.25Z" fill="#b8b8b8"/></svg>
<svg style="left:307.5px;top:452.5px" width="7" height="11" viewBox="0 0 7 11"><path d="M5.8 0.5V10L0.6 5.25Z" fill="#b8b8b8"/></svg>
<svg style="left:331.5px;top:452.5px" width="7" height="11" viewBox="0 0 7 11"><path d="M0.8 0.5V10L6 5.25Z" fill="#2a2a22"/></svg>
<svg style="left:354.5px;top:452.5px" width="10" height="11" viewBox="0 0 10 11"><path d="M0.5 0.5V10L6.7 5.25Z" fill="#2a2a22"/><rect x="7.2" y="0.5" width="1.8" height="9.5" fill="#2a2a22"/></svg>
<svg style="left:376.5px;top:452px" width="13" height="13" viewBox="0 0 13 13"><circle cx="6.2" cy="6.2" r="5.8" fill="#215e93"/><path d="M6.2 3V9.4M3 6.2H9.4" stroke="#fff" stroke-width="1.7"/></svg>
<svg style="left:400px;top:452px" width="13" height="13" viewBox="0 0 13 13"><circle cx="6.2" cy="6.2" r="5.8" fill="#215e93"/><path d="M3 6.2H9.4" stroke="#fff" stroke-width="1.8"/></svg>
<svg style="left:424.5px;top:454.5px" width="12" height="7" viewBox="0 0 12 7"><path d="M0.5 6.5L5.8 0.8L11.1 6.5Z" fill="#2a2a22"/></svg>
<svg style="left:448px;top:452px" width="13" height="13" viewBox="0 0 13 13"><circle cx="6.2" cy="6.2" r="5.8" fill="#6cc48a"/><path d="M3.4 6.3L5.4 8.3L9.2 4.3" stroke="#fff" stroke-width="1.6" fill="none"/></svg>
<svg style="left:472px;top:452px" width="13" height="13" viewBox="0 0 13 13"><circle cx="6.2" cy="6.2" r="5.8" fill="#ea8a8e"/><path d="M4.2 4.2L8.2 8.2M8.2 4.2L4.2 8.2" stroke="#fff" stroke-width="1.5"/></svg>
<div class="t" style="left:510.50px;top:454.24px;font-size:10.7px;color:#111;letter-spacing:0.000px;">Order by:</div>
<div class="a" style="left:558px;top:450.2px;width:89.3px;height:17.4px;background:#fff;border:1px solid #a9a9a9"></div>
<div class="t" style="left:560.40px;top:454.24px;font-size:10.7px;color:#111;">ID</div>
<svg style="left:636.5px;top:456px" width="7" height="5" viewBox="0 0 7 5"><path d="M0.5 0.8L3.5 3.8L6.5 0.8" stroke="#444" stroke-width="0.9" fill="none"/></svg>
<svg style="left:707.5px;top:451px" width="15" height="14" viewBox="0 0 15 14"><rect x="4.5" y="0.8" width="9.5" height="12.4" fill="#fff" stroke="#2b6497" stroke-width="1.5"/><rect x="11" y="3" width="1.3" height="1.3" fill="#4b94d6"/><rect x="11" y="6" width="1.3" height="1.3" fill="#4b94d6"/><rect x="11" y="9" width="1.3" height="1.3" fill="#4b94d6"/><path d="M0.5 5.8H4.5V3.5L8.5 7L4.5 10.5V8.2H0.5Z" fill="#d9363e"/></svg>
<svg style="left:730.5px;top:450.5px" width="15" height="15" viewBox="0 0 15 15"><path d="M0.8 0.8H6.5L9 3.3V10.5H0.8Z" fill="#2b6497"/><rect x="2.3" y="5.5" width="4" height="1" fill="#fff"/><rect x="2.3" y="7.4" width="3" height="1" fill="#fff"/><path d="M6.5 5.5H10.5L13.8 8.8V14.2H6.5Z" fill="#4b94d6"/></svg>
<svg style="left:752px;top:450.5px" width="15" height="15" viewBox="0 0 15 15"><rect x="0.8" y="2.5" width="8" height="10.5" fill="#9b6b3f"/><rect x="3" y="0.8" width="3.6" height="2.5" fill="#c08a55"/><path d="M6 5.5H10.2L13.8 9V14.2H6Z" fill="#5aa0dc"/></svg>
<svg style="left:774px;top:450.5px" width="17" height="15" viewBox="0 0 17 15"><path d="M7.5 12.5L1.5 6.5Q0 8 1 10L3.5 12.5Z" fill="#d9363e"/><path d="M10.5 1L16 6.5L9 13.5L3.5 8Z" fill="#3d8bd3"/><rect x="9.5" y="12.3" width="1.5" height="1.5" fill="#4b94d6"/><rect x="12.5" y="12.5" width="1.5" height="1.5" fill="#4b94d6"/></svg>
<div class="a" style="left:267.3px;top:472px;width:538px;height:1px;background:#fafafa;"></div>
<div class="a" style="left:2px;top:477.5px;width:803px;height:1px;background:#d4d4d4;"></div>
<div class="a" style="left:2px;top:478.5px;width:803px;height:19px;background:#f0f0f0;border-radius:0 0 6px 6px"></div>
<div class="a" style="left:490px;top:480px;width:1px;height:17px;background:#d8d8d8;"></div>
<div class="t" style="left:5.40px;top:484.51px;font-size:11.8px;color:#111;letter-spacing:-0.144px;">Project: D:\TechnicalSupport</div>
<div class="t" style="left:151.10px;top:484.51px;font-size:11.8px;color:#111;letter-spacing:-0.037px;">\2025\Irsko</div>
<div class="t" style="left:210.00px;top:484.51px;font-size:11.8px;color:#111;letter-spacing:-0.472px;">\20250822</div>
<div class="t" style="left:263.00px;top:484.51px;font-size:11.8px;color:#111;letter-spacing:-0.333px;">\NFI5_Ireland</div>
<div class="t" style="left:334.50px;top:484.51px;font-size:11.8px;color:#111;letter-spacing:-0.840px;">[FIREBIRD_LOCALDB]</div>
<div class="t" style="left:447.30px;top:484.51px;font-size:11.8px;color:#111;letter-spacing:-0.898px;">(DAFM)</div>
</body></html>
